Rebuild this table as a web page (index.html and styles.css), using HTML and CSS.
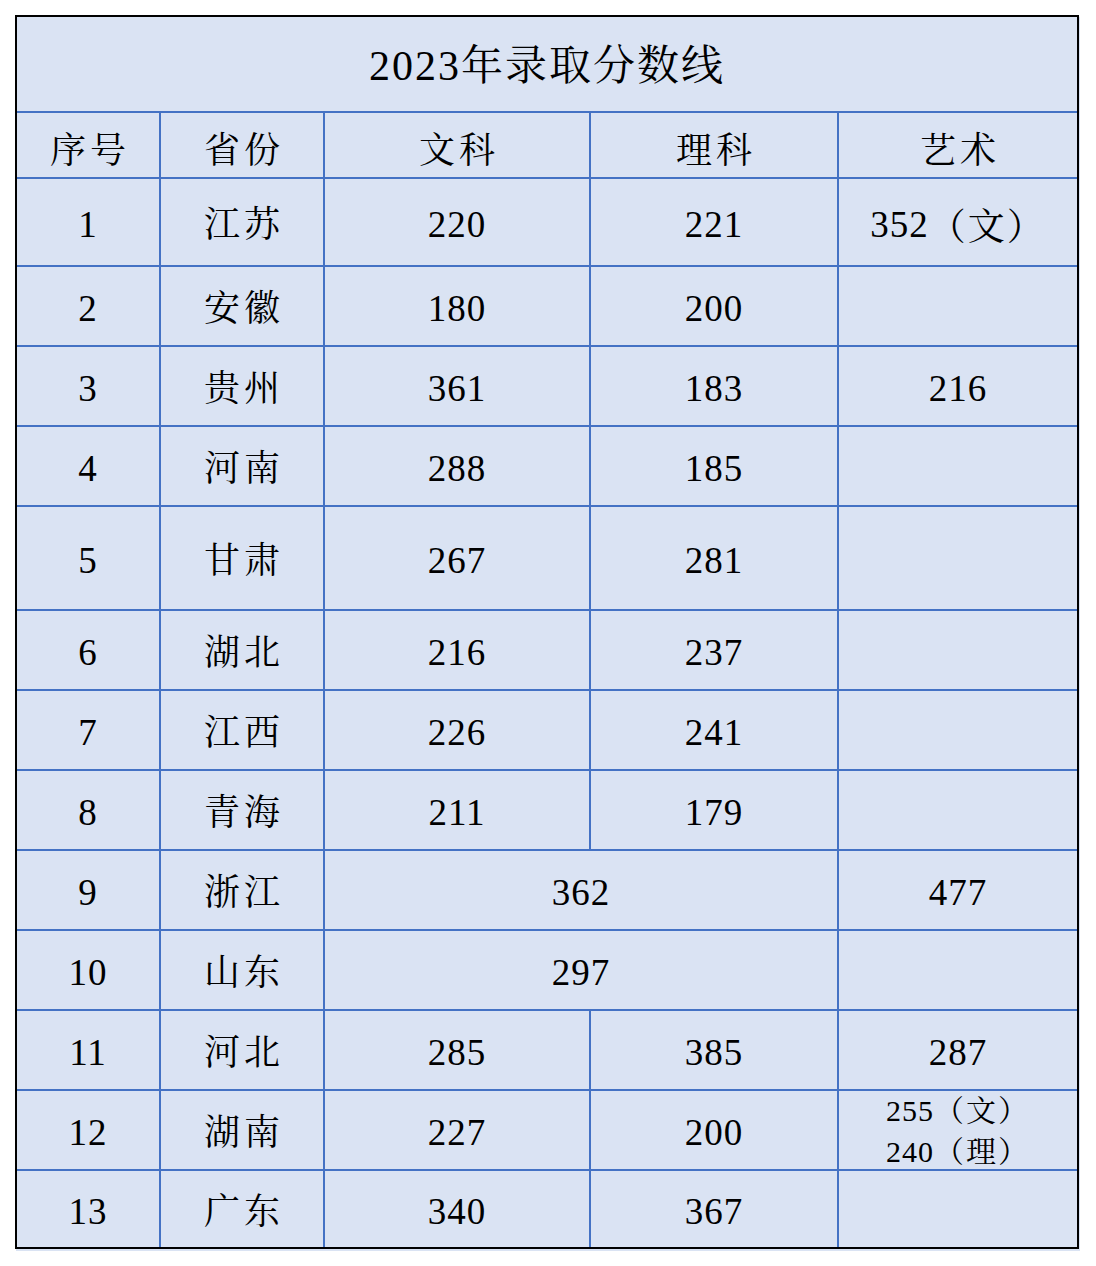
FILE: index.html
```html
<!DOCTYPE html>
<html lang="zh-CN">
<head>
<meta charset="utf-8">
<title>2023年录取分数线</title>
<link rel="stylesheet" href="styles.css">
</head>
<body>
<div class="page">
  <div class="sheet">
    <div class="cell title">2023年录取分数线</div>

    <div class="cell head">序号</div>
    <div class="cell head">省份</div>
    <div class="cell head">文科</div>
    <div class="cell head">理科</div>
    <div class="cell head">艺术</div>

    <div class="cell num">1</div><div class="cell prov">江苏</div><div class="cell num">220</div><div class="cell num">221</div><div class="cell num">352<span class="cjk">（文）</span></div>
    <div class="cell num">2</div><div class="cell prov">安徽</div><div class="cell num">180</div><div class="cell num">200</div><div class="cell num"></div>
    <div class="cell num">3</div><div class="cell prov">贵州</div><div class="cell num">361</div><div class="cell num">183</div><div class="cell num">216</div>
    <div class="cell num">4</div><div class="cell prov">河南</div><div class="cell num">288</div><div class="cell num">185</div><div class="cell num"></div>
    <div class="cell num">5</div><div class="cell prov">甘肃</div><div class="cell num">267</div><div class="cell num">281</div><div class="cell num"></div>
    <div class="cell num">6</div><div class="cell prov">湖北</div><div class="cell num">216</div><div class="cell num">237</div><div class="cell num"></div>
    <div class="cell num">7</div><div class="cell prov">江西</div><div class="cell num">226</div><div class="cell num">241</div><div class="cell num"></div>
    <div class="cell num">8</div><div class="cell prov">青海</div><div class="cell num">211</div><div class="cell num">179</div><div class="cell num"></div>
    <div class="cell num">9</div><div class="cell prov">浙江</div><div class="cell num merged">362</div><div class="cell num">477</div>
    <div class="cell num">10</div><div class="cell prov">山东</div><div class="cell num merged">297</div><div class="cell num"></div>
    <div class="cell num">11</div><div class="cell prov">河北</div><div class="cell num">285</div><div class="cell num">385</div><div class="cell num">287</div>
    <div class="cell num">12</div><div class="cell prov">湖南</div><div class="cell num">227</div><div class="cell num">200</div><div class="cell num two"><span>255<span class="cjk">（文）</span></span><span>240<span class="cjk">（理）</span></span></div>
    <div class="cell num">13</div><div class="cell prov">广东</div><div class="cell num">340</div><div class="cell num">367</div><div class="cell num"></div>
  </div>
</div>
</body>
</html>
```

FILE: styles.css
```css
html, body {
  margin: 0;
  padding: 0;
  background: #ffffff;
}

.page {
  padding: 15px;
}

.sheet {
  width: 1060px;
  border: 2px solid #000000;
  background: #4472c4;
  display: grid;
  grid-template-columns: 142px 162px 264px 246px 238px;
  grid-template-rows: 94px 64px 86px 78px 78px 78px 102px 78px 78px 78px 78px 78px 78px 78px 76px;
  gap: 2px;
  box-shadow: 1px 2px 0 #dae3f3;
  color: #000000;
}

.cell {
  background: #dae3f3;
  display: flex;
  align-items: center;
  justify-content: center;
  font-family: "Liberation Serif", "Noto Serif CJK SC", serif;
  font-size: 37px;
  line-height: 1;
}

.title {
  grid-column: 1 / -1;
  font-size: 42px;
  letter-spacing: 2px;
  padding-top: 4px;
}

.head,
.prov,
.cjk {
  font-family: "Noto Serif CJK SC", serif;
}

.head,
.prov {
  font-size: 36px;
  letter-spacing: 4px;
  padding-left: 4px;
}

.head {
  padding-top: 6px;
}

.num {
  padding-top: 4px;
  letter-spacing: 1px;
}

.num .cjk {
  letter-spacing: 2px;
}

.merged {
  grid-column: span 2;
}

.two {
  flex-direction: column;
  font-size: 30px;
  line-height: 38px;
  padding-top: 0;
}
```
